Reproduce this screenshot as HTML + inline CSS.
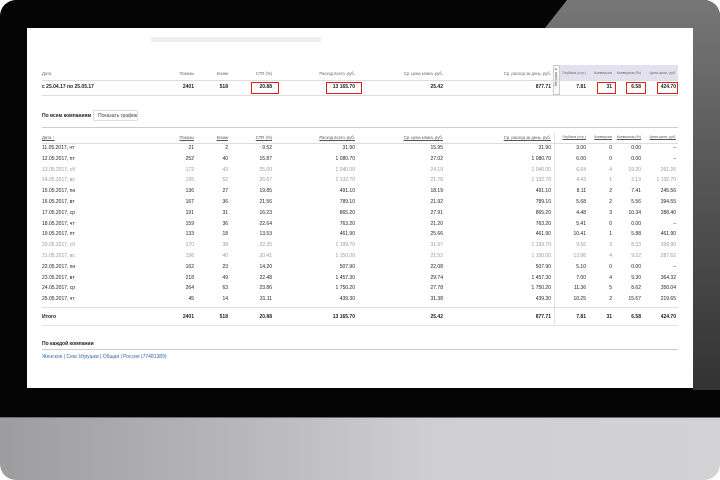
<!DOCTYPE html>
<html><head><meta charset="utf-8"><style>
*{margin:0;padding:0;box-sizing:border-box}
body{width:720px;height:480px;overflow:hidden;background:#fff;position:relative;font-family:"Liberation Sans","Noto Sans CJK SC",sans-serif;font-size:5px;color:#222}
.frame{position:absolute;left:0;top:0;width:720px;height:430px;background:#050505;border-radius:16px 16px 0 0}
.refl{position:absolute;left:0;top:0;width:720px;height:390px;background:linear-gradient(180deg,#777 0%,#5a5a5a 40%,#333 100%);clip-path:polygon(567px 0,720px 0,720px 390px,693px 390px,693px 28px,545px 28px);border-radius:0 16px 0 0}
.chin{position:absolute;left:0;top:417px;width:720px;height:63px;background:linear-gradient(90deg,#9d9da0 0%,#b9b9bc 35%,#cfcfd2 60%,#d3d3d6 100%);border-radius:0 0 16px 16px;border-top:1px solid #6c6c6e}
.screen{position:absolute;left:27px;top:28px;width:666px;height:360px;background:#fff}
.a{position:absolute;white-space:nowrap}
.r{position:absolute;left:0;width:720px;height:10px}
.r span{position:absolute;width:60px;text-align:right}
.r span.d{width:auto;text-align:left;left:42px}
.h span{font-size:4.2px}
.h span.s{font-size:3.6px}
.g{color:#999}
.b{font-weight:bold}
.u span{text-decoration:underline;color:#555}
.hl{position:absolute;height:1px;background:#ddd}
.box{position:absolute;border:1px solid #d22;height:12px}
</style></head><body>
<div class="frame"></div><div class="refl"></div>
<div class="chin"></div>
<div class="screen"></div>
<div class="a" style="left:151px;top:37px;width:170px;height:5px;background:#eee"></div>

<div style="position:absolute;left:560px;top:65px;width:118px;height:15px;background:#e3e1ef"></div>
<div style="position:absolute;left:553px;top:65px;width:7px;height:30px;border:1px solid #ccc;background:#fafafa"></div>
<div class="a" style="left:554px;top:67px;font-size:3.5px;writing-mode:vertical-rl;transform:rotate(180deg);color:#444">Метрика ▾</div>

<div class="r h" style="top:71px;color:#666"><span class="d">Дата</span><span style="left:134px">Показы</span><span style="left:168px">Клики</span><span style="left:212px">CTR (%)</span><span style="left:295px">Расход всего, руб.</span><span style="left:383px">Ср. цена клика, руб.</span><span style="left:491px">Ср. расход за день, руб.</span><span class="s" style="left:526px">Глубина (стр.)</span><span class="s" style="left:552px">Конверсии</span><span class="s" style="left:581px">Конверсия (%)</span><span class="s" style="left:616px">Цена цели, руб.</span></div>
<div class="hl" style="left:42px;top:80px;width:636px"></div>
<div class="r b" style="top:84px"><span class="d">с 25.04.17 по 25.05.17</span><span style="left:134px">2401</span><span style="left:168px">518</span><span style="left:212px">20.88</span><span style="left:295px">13 165.70</span><span style="left:383px">25.42</span><span style="left:491px">877.71</span><span style="left:526px">7.81</span><span style="left:552px">31</span><span style="left:581px">6.58</span><span style="left:616px">424.70</span></div>
<div class="hl" style="left:42px;top:95px;width:636px"></div>
<div class="box" style="left:251px;top:82px;width:28px"></div>
<div class="box" style="left:326px;top:82px;width:36px"></div>
<div class="box" style="left:597px;top:82px;width:19px"></div>
<div class="box" style="left:626px;top:82px;width:20px"></div>
<div class="box" style="left:657px;top:82px;width:21px"></div>

<div class="a b" style="left:42px;top:113px">По всем компаниям</div>
<div class="a" style="left:93px;top:110px;width:45px;height:11px;border:1px solid #ddd;border-radius:2px;padding:2px 0 0 4px;color:#444">Показать график</div>
<div class="hl" style="left:42px;top:127px;width:636px;background:#ccc"></div>
<div style="position:absolute;left:554px;top:133px;width:1px;height:193px;background:#e2e2e2"></div>

<div class="r u h" style="top:135px"><span class="d">Дата ↑</span><span style="left:134px">Показы</span><span style="left:168px">Клики</span><span style="left:212px">CTR (%)</span><span style="left:295px">Расход всего, руб.</span><span style="left:383px">Ср. цена клика, руб.</span><span style="left:491px">Ср. расход за день, руб.</span><span class="s" style="left:526px">Глубина (стр.)</span><span class="s" style="left:552px">Конверсии</span><span class="s" style="left:581px">Конверсия (%)</span><span class="s" style="left:616px">Цена цели, руб.</span></div>
<div class="hl" style="left:42px;top:143px;width:636px"></div>

<div class="r" style="top:145px"><span class="d">11.05.2017, чт</span><span style="left:134px">21</span><span style="left:168px">2</span><span style="left:212px">9.52</span><span style="left:295px">31.90</span><span style="left:383px">15.95</span><span style="left:491px">31.90</span><span style="left:526px">3.00</span><span style="left:552px">0</span><span style="left:581px">0.00</span><span style="left:616px">–</span></div>
<div class="r" style="top:155.8px"><span class="d">12.05.2017, пт</span><span style="left:134px">252</span><span style="left:168px">40</span><span style="left:212px">15.87</span><span style="left:295px">1 080.70</span><span style="left:383px">27.02</span><span style="left:491px">1 080.70</span><span style="left:526px">6.00</span><span style="left:552px">0</span><span style="left:581px">0.00</span><span style="left:616px">–</span></div>
<div class="r g" style="top:166.6px"><span class="d">13.05.2017, сб</span><span style="left:134px">172</span><span style="left:168px">43</span><span style="left:212px">25.00</span><span style="left:295px">1 040.00</span><span style="left:383px">24.19</span><span style="left:491px">1 040.00</span><span style="left:526px">6.64</span><span style="left:552px">4</span><span style="left:581px">19.20</span><span style="left:616px">261.26</span></div>
<div class="r g" style="top:177.4px"><span class="d">14.05.2017, вс</span><span style="left:134px">195</span><span style="left:168px">52</span><span style="left:212px">26.67</span><span style="left:295px">1 132.70</span><span style="left:383px">21.78</span><span style="left:491px">1 132.70</span><span style="left:526px">4.43</span><span style="left:552px">1</span><span style="left:581px">2.13</span><span style="left:616px">1 132.70</span></div>
<div class="r" style="top:188.2px"><span class="d">15.05.2017, пн</span><span style="left:134px">136</span><span style="left:168px">27</span><span style="left:212px">19.85</span><span style="left:295px">491.10</span><span style="left:383px">18.19</span><span style="left:491px">491.10</span><span style="left:526px">8.11</span><span style="left:552px">2</span><span style="left:581px">7.41</span><span style="left:616px">245.56</span></div>
<div class="r" style="top:199px"><span class="d">16.05.2017, вт</span><span style="left:134px">167</span><span style="left:168px">36</span><span style="left:212px">21.56</span><span style="left:295px">789.10</span><span style="left:383px">21.92</span><span style="left:491px">789.10</span><span style="left:526px">5.68</span><span style="left:552px">2</span><span style="left:581px">5.56</span><span style="left:616px">394.55</span></div>
<div class="r" style="top:209.8px"><span class="d">17.05.2017, ср</span><span style="left:134px">191</span><span style="left:168px">31</span><span style="left:212px">16.23</span><span style="left:295px">865.20</span><span style="left:383px">27.91</span><span style="left:491px">865.20</span><span style="left:526px">4.48</span><span style="left:552px">3</span><span style="left:581px">10.34</span><span style="left:616px">288.40</span></div>
<div class="r" style="top:220.6px"><span class="d">18.05.2017, чт</span><span style="left:134px">159</span><span style="left:168px">36</span><span style="left:212px">22.64</span><span style="left:295px">763.20</span><span style="left:383px">21.20</span><span style="left:491px">763.20</span><span style="left:526px">5.41</span><span style="left:552px">0</span><span style="left:581px">0.00</span><span style="left:616px">–</span></div>
<div class="r" style="top:231.4px"><span class="d">19.05.2017, пт</span><span style="left:134px">133</span><span style="left:168px">18</span><span style="left:212px">13.53</span><span style="left:295px">461.90</span><span style="left:383px">25.66</span><span style="left:491px">461.90</span><span style="left:526px">10.41</span><span style="left:552px">1</span><span style="left:581px">5.88</span><span style="left:616px">461.90</span></div>
<div class="r g" style="top:242.2px"><span class="d">20.05.2017, сб</span><span style="left:134px">170</span><span style="left:168px">38</span><span style="left:212px">22.35</span><span style="left:295px">1 199.70</span><span style="left:383px">31.57</span><span style="left:491px">1 199.70</span><span style="left:526px">9.56</span><span style="left:552px">3</span><span style="left:581px">8.33</span><span style="left:616px">399.90</span></div>
<div class="r g" style="top:253px"><span class="d">21.05.2017, вс</span><span style="left:134px">196</span><span style="left:168px">40</span><span style="left:212px">20.41</span><span style="left:295px">1 150.00</span><span style="left:383px">21.52</span><span style="left:491px">1 150.00</span><span style="left:526px">13.86</span><span style="left:552px">4</span><span style="left:581px">9.52</span><span style="left:616px">287.62</span></div>
<div class="r" style="top:263.8px"><span class="d">22.05.2017, пн</span><span style="left:134px">162</span><span style="left:168px">23</span><span style="left:212px">14.20</span><span style="left:295px">507.90</span><span style="left:383px">22.08</span><span style="left:491px">507.90</span><span style="left:526px">5.10</span><span style="left:552px">0</span><span style="left:581px">0.00</span><span style="left:616px">–</span></div>
<div class="r" style="top:274.6px"><span class="d">23.05.2017, вт</span><span style="left:134px">218</span><span style="left:168px">49</span><span style="left:212px">22.48</span><span style="left:295px">1 457.30</span><span style="left:383px">29.74</span><span style="left:491px">1 457.30</span><span style="left:526px">7.00</span><span style="left:552px">4</span><span style="left:581px">9.30</span><span style="left:616px">364.32</span></div>
<div class="r" style="top:285.4px"><span class="d">24.05.2017, ср</span><span style="left:134px">264</span><span style="left:168px">63</span><span style="left:212px">23.86</span><span style="left:295px">1 750.20</span><span style="left:383px">27.78</span><span style="left:491px">1 750.20</span><span style="left:526px">11.36</span><span style="left:552px">5</span><span style="left:581px">8.62</span><span style="left:616px">350.04</span></div>
<div class="r" style="top:296.2px"><span class="d">25.05.2017, чт</span><span style="left:134px">45</span><span style="left:168px">14</span><span style="left:212px">31.11</span><span style="left:295px">439.30</span><span style="left:383px">31.38</span><span style="left:491px">439.30</span><span style="left:526px">10.25</span><span style="left:552px">2</span><span style="left:581px">15.67</span><span style="left:616px">219.65</span></div>
<div class="hl" style="left:42px;top:307px;width:636px"></div>
<div class="r b" style="top:314px"><span class="d">Итого</span><span style="left:134px">2401</span><span style="left:168px">518</span><span style="left:212px">20.88</span><span style="left:295px">13 165.70</span><span style="left:383px">25.42</span><span style="left:491px">877.71</span><span style="left:526px">7.81</span><span style="left:552px">31</span><span style="left:581px">6.58</span><span style="left:616px">424.70</span></div>
<div class="hl" style="left:42px;top:325px;width:636px;background:#e4e4e4"></div>

<div class="a b" style="left:42px;top:341px">По каждой компании</div>
<div class="hl" style="left:42px;top:349px;width:636px;background:#ccc"></div>
<div class="a" style="left:42px;top:354px;color:#3366aa">Женское | Секс Игрушки | Общая | Россия (77481389)</div>
</body></html>
